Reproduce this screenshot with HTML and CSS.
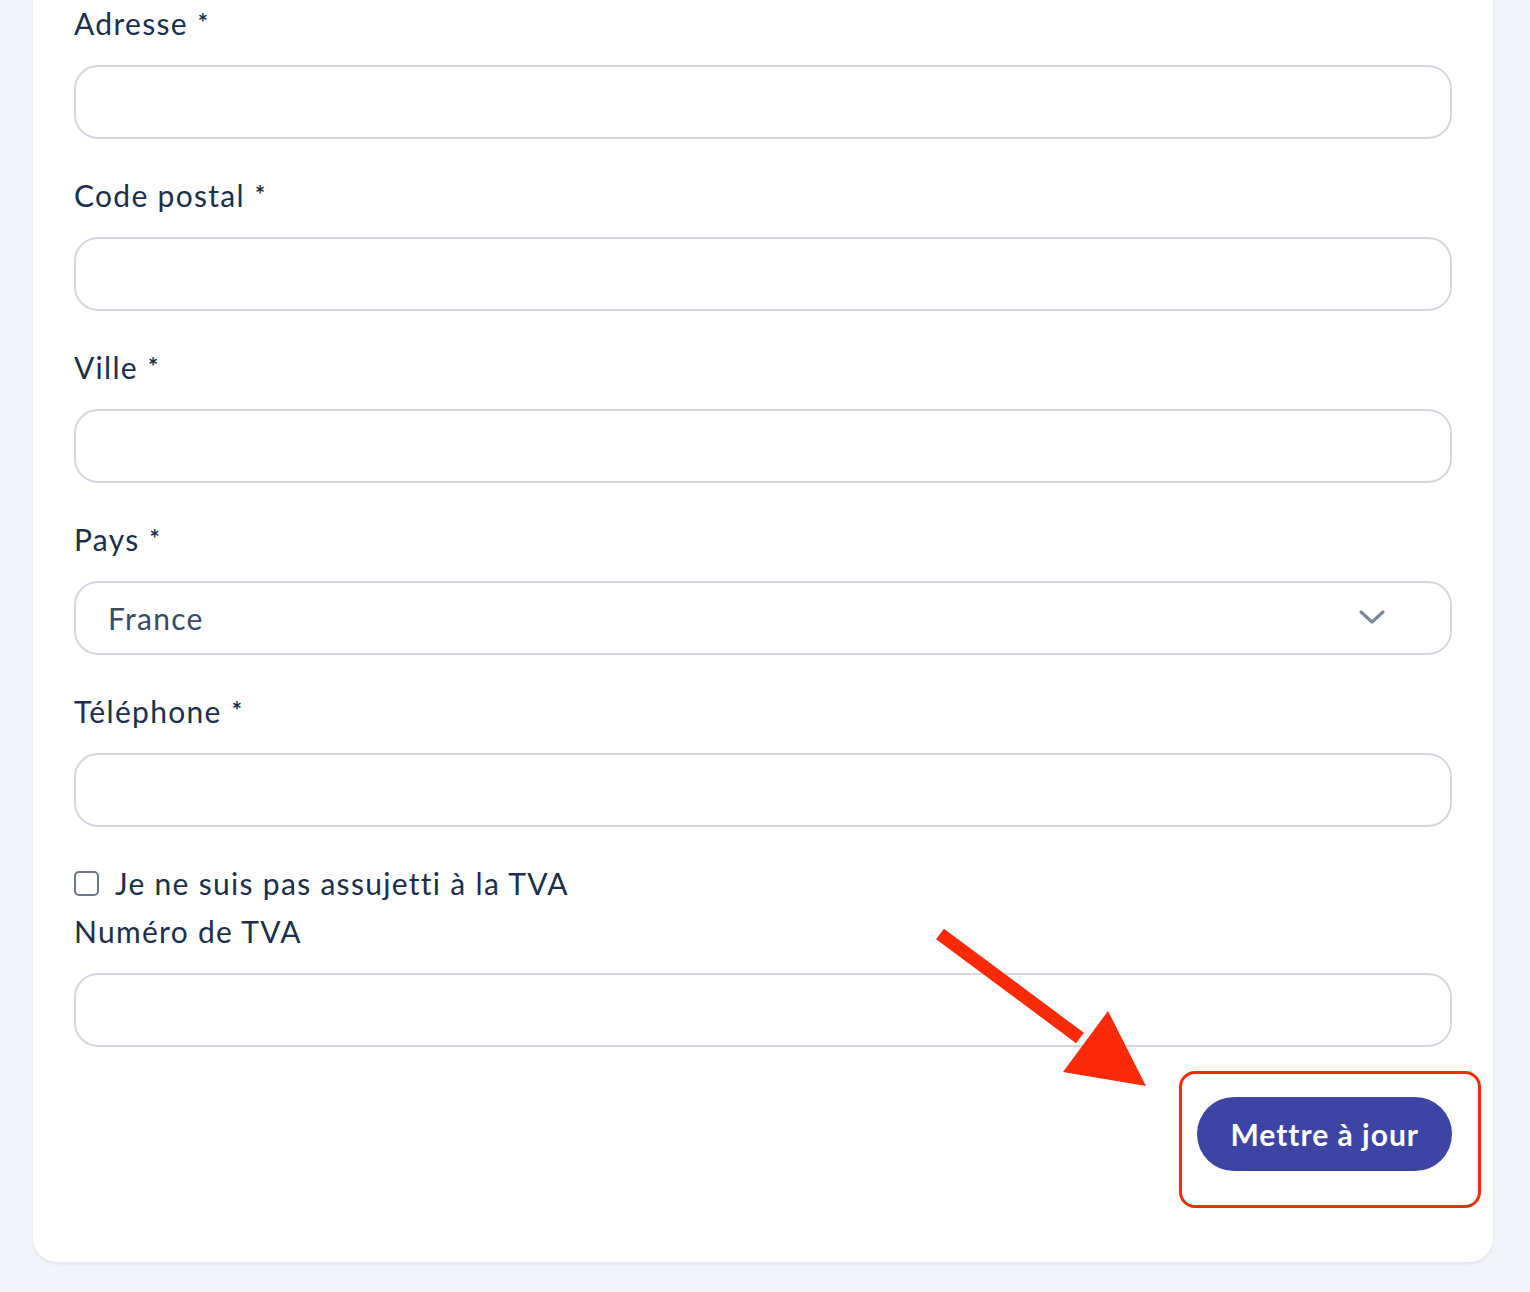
FILE: index.html
```html
<!DOCTYPE html>
<html lang="fr">
<head>
    <meta charset="UTF-8">
    <meta name="viewport" content="width=device-width, initial-scale=1.0">
    <title>Mon compte - Facturation</title>
    <link rel="stylesheet" href="styles.css">
</head>
<body>
    <div class="card">
        <form class="billing-form">
            <div class="field">
                <label for="address">Adresse <span class="req">*</span></label>
                <input type="text" id="address" name="address">
            </div>
            <div class="field">
                <label for="zip">Code postal <span class="req">*</span></label>
                <input type="text" id="zip" name="zip">
            </div>
            <div class="field">
                <label for="city">Ville <span class="req">*</span></label>
                <input type="text" id="city" name="city">
            </div>
            <div class="field">
                <label for="country">Pays <span class="req">*</span></label>
                <div class="select-wrap">
                    <select id="country" name="country">
                        <option>France</option>
                        <option>Belgique</option>
                        <option>Suisse</option>
                    </select>
                    <svg class="chevron" width="28" height="18" viewBox="0 0 28 18">
                        <path d="M3 4 L14 14 L25 4" fill="none" stroke="#7c869a" stroke-width="3.2" stroke-linecap="round" stroke-linejoin="round"/>
                    </svg>
                </div>
            </div>
            <div class="field">
                <label for="phone">Téléphone <span class="req">*</span></label>
                <input type="text" id="phone" name="phone">
            </div>
            <label class="check-row">
                <input type="checkbox" name="no_vat">
                <span>Je ne suis pas assujetti à la TVA</span>
            </label>
            <div class="field">
                <label for="vat">Numéro de TVA</label>
                <input type="text" id="vat" name="vat">
            </div>
            <div class="actions">
                <button type="submit" class="button">Mettre à jour</button>
                <span class="highlight"></span>
            </div>
        </form>
        <svg class="arrow" width="1530" height="1292" viewBox="0 0 1530 1292">
            <line x1="940" y1="934" x2="1080" y2="1038" stroke="#fa2a08" stroke-width="13"/>
            <polygon points="1063,1072 1108,1011 1146,1086" fill="#fa2a08"/>
        </svg>
    </div>
</body>
</html>
```
FILE: styles.css
```css
body {
    margin: 0;
    padding: 0;
    background-color: #f3f4f9;
    font-family: "Lato", "Noto Sans", sans-serif;
    color: #1c2f4a;
}

.card {
    margin: -35px 37px 31px 33px;
    padding: 40px 41px 91px 41px;
    background-color: #fff;
    border-radius: 24px;
    box-shadow: 0 2px 3px rgba(30, 40, 80, 0.08);
}

.billing-form {
    display: flex;
    flex-direction: column;
}

.field {
    display: flex;
    flex-direction: column;
    margin-bottom: 38px;
}

.field label {
    height: 36px;
    font-size: 30px;
    line-height: 36px;
    letter-spacing: 1.3px;
    margin-bottom: 24px;
}

.req {
    font-size: 24px;
    font-weight: 700;
    line-height: 0;
    vertical-align: 3px;
    margin-left: 1px;
}

.field input[type="text"],
.field select {
    width: 100%;
    height: 74px;
    box-sizing: border-box;
    border: 2px solid #d3d7de;
    border-radius: 24px;
    background: #fff;
    padding: 0 32px;
    font-family: inherit;
    font-size: 30px;
    letter-spacing: 1.3px;
    color: #3c4a60;
    outline: none;
}

.select-wrap {
    position: relative;
}

.field select {
    appearance: none;
    -webkit-appearance: none;
}

.chevron {
    position: absolute;
    right: 66px;
    top: 27px;
    pointer-events: none;
}

.check-row {
    display: flex;
    align-items: center;
    gap: 16px;
    height: 36px;
    font-size: 30px;
    line-height: 36px;
    letter-spacing: 1.3px;
    margin-bottom: 12px;
}

.check-row input {
    appearance: none;
    -webkit-appearance: none;
    width: 25px;
    height: 25px;
    margin: 0;
    box-sizing: border-box;
    border: 2px solid #6e7787;
    border-radius: 5px;
}

.actions {
    position: relative;
    display: flex;
    justify-content: flex-end;
    margin-top: 12px;
}

.button {
    height: 74px;
    padding: 0 33px;
    border: none;
    border-radius: 37px;
    background-color: #3d44a3;
    color: #fff;
    font-family: inherit;
    font-size: 30px;
    font-weight: 700;
    letter-spacing: 1px;
    cursor: pointer;
}

.highlight {
    position: absolute;
    right: -29px;
    top: -26px;
    width: 302px;
    height: 137px;
    box-sizing: border-box;
    border: 3px solid #fa2a08;
    border-radius: 16px;
    pointer-events: none;
}

.arrow {
    position: absolute;
    left: 0;
    top: 0;
    pointer-events: none;
}
```
